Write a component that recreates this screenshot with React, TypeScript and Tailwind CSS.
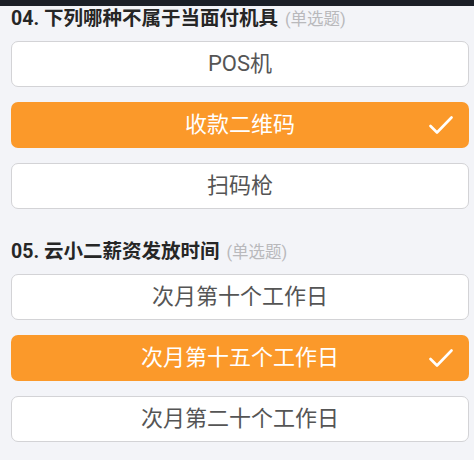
import React from "react";

type Opt = { label: string; selected?: boolean };

const Check = () => (
  <svg width="24" height="20" viewBox="0 0 24 20" fill="none" className="absolute right-[16px] top-1/2 -translate-y-1/2">
    <path d="M1.5 11 L8 17.5 L22.5 2.5" stroke="#fff" strokeWidth="2.6" strokeLinecap="round" strokeLinejoin="round" />
  </svg>
);

const Option = ({ label, selected }: Opt) => (
  <div
    className={
      selected
        ? "relative flex h-[46px] items-center justify-center rounded-[7px] bg-[#fb992a] text-[22px] text-white"
        : "relative flex h-[46px] items-center justify-center rounded-[7px] border border-[#d3d3d6] bg-white text-[22px] text-[#555555]"
    }
  >
    <span className="leading-none">{label}</span>
    {selected && <Check />}
  </div>
);

const Question = ({ title, options }: { title: string; options: Opt[] }) => (
  <div>
    <div className="h-[25px] leading-[25px] text-[19.5px] font-bold text-[#262626] whitespace-nowrap">
      {title}
      <span className="ml-[7px] text-[16.5px] font-normal text-[#b9b9bc]">(单选题)</span>
    </div>
    <div className="mt-[10px] flex flex-col gap-[15px]">
      {options.map((o) => (
        <Option key={o.label} {...o} />
      ))}
    </div>
  </div>
);

export default function App() {
  return (
    <div
      className="min-h-screen w-[474px] bg-[#f3f4f8]"
      style={{ fontFamily: 'Roboto, "Noto Sans CJK SC", sans-serif' }}
    >
      <div className="h-[6px] bg-[#1b1f27]" />
      <div className="flex flex-col gap-[30px] pl-[11px] pr-[5px]">
        <Question
          title="04. 下列哪种不属于当面付机具"
          options={[{ label: "POS机" }, { label: "收款二维码", selected: true }, { label: "扫码枪" }]}
        />
        <Question
          title="05. 云小二薪资发放时间"
          options={[
            { label: "次月第十个工作日" },
            { label: "次月第十五个工作日", selected: true },
            { label: "次月第二十个工作日" },
          ]}
        />
      </div>
    </div>
  );
}
